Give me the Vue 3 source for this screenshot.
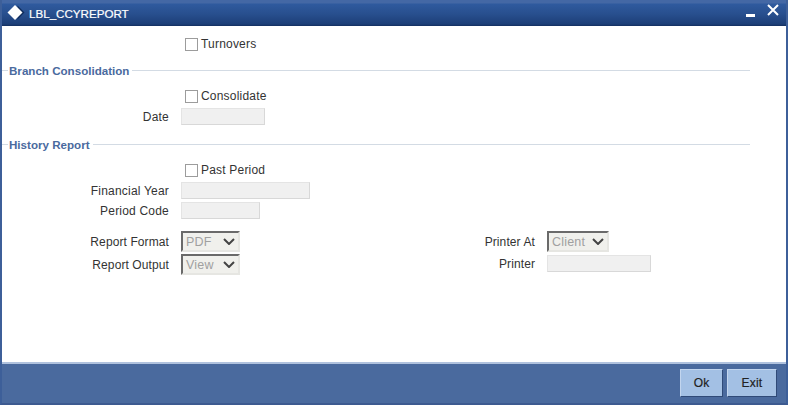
<script setup>
const hist = [
  { label: 'Financial Year', cls: 'w129' },
  { label: 'Period Code', cls: 'w79' }
]
</script>

<template>
  <div class="win">
    <header class="title">
      <svg class="logo" width="18" height="16" viewBox="0 0 18 16"><path d="M10.5 0.5 L17.5 7.5 L10.5 14.5 Z" fill="#0f2c5c"/><path d="M8 0 L15.5 7.5 L8 15 L0.5 7.5 Z" fill="#fff"/></svg>
      <span class="title-text">LBL_CCYREPORT</span>
      <svg class="min" width="9" height="3" viewBox="0 0 9 3"><rect width="9" height="3" fill="#fff"/></svg>
      <svg class="close" width="12" height="12" viewBox="0 0 12 12"><path d="M1 1 L11 11 M11 1 L1 11" stroke="#fff" stroke-width="2" fill="none"/></svg>
    </header>

    <main class="body">
      <div class="row check r1"><span class="label"></span><span class="box"></span><span class="txt">Turnovers</span></div>

      <div class="legend l1"><span>Branch Consolidation</span></div>
      <div class="row check r2"><span class="label"></span><span class="box"></span><span class="txt">Consolidate</span></div>
      <div class="row r3"><span class="label">Date</span><span class="input w84"></span></div>

      <div class="legend l2"><span>History Report</span></div>
      <div class="row check r4"><span class="label"></span><span class="box"></span><span class="txt">Past Period</span></div>
      <div v-for="h in hist" :key="h.label" class="row r5"><span class="label">{{ h.label }}</span><span class="input" :class="h.cls"></span></div>

      <div class="cols">
        <div class="col">
          <div class="row"><span class="label">Report Format</span>
            <span class="select w59"><span>PDF</span><svg width="12" height="7" viewBox="0 0 12 7"><path d="M1 1 L6 6 L11 1" stroke="#444" stroke-width="2" fill="none"/></svg></span>
          </div>
          <div class="row gap"><span class="label">Report Output</span>
            <span class="select w59"><span>View</span><svg width="12" height="7" viewBox="0 0 12 7"><path d="M1 1 L6 6 L11 1" stroke="#444" stroke-width="2" fill="none"/></svg></span>
          </div>
        </div>
        <div class="col right">
          <div class="row"><span class="label">Printer At</span>
            <span class="select w62"><span>Client</span><svg width="12" height="7" viewBox="0 0 12 7"><path d="M1 1 L6 6 L11 1" stroke="#444" stroke-width="2" fill="none"/></svg></span>
          </div>
          <div class="row gap2"><span class="label">Printer</span><span class="input w104"></span></div>
        </div>
      </div>
    </main>

    <footer class="foot">
      <button class="btn ok">Ok</button>
      <button class="btn exit">Exit</button>
    </footer>
  </div>
</template>

<style>
html, body { margin: 0; padding: 0; background: #fff; }
</style>

<style scoped>
.win {
  width: 788px; height: 405px; box-sizing: border-box;
  display: flex; flex-direction: column;
  background: #fff;
  border-left: 2px solid #3d5f99; border-right: 2px solid #3d5f99; border-bottom: 2px solid #3d5a90;
  font: 12px "Liberation Sans", Arial, sans-serif; color: #333; letter-spacing: .2px;
  overflow: hidden;
}
.title {
  height: 26px; box-sizing: border-box; flex: none;
  margin: 0 -2px; padding: 0 9px 0 7px;
  display: flex; align-items: center;
  background: linear-gradient(#4468a5 0, #4468a5 3px, #2f5a9e 4px, #284f8e 14px, #1d3f78 24px, #142f60 26px);
  color: #fff;
}
.logo { flex: none; }
.title-text { margin-left: 4px; font-size: 11.6px; letter-spacing: 0; -webkit-text-stroke: .2px #fff; }
.min { margin-left: auto; margin-top: 5px; }
.close { margin-left: 12px; margin-top: -6px; }

.body { flex: 1; min-height: 0; }
.row { display: flex; align-items: center; height: 17px; }
.label { width: 167px; text-align: right; margin-right: 12px; flex: none; white-space: nowrap; }
.check .label { margin-right: 16px; }
.box { width: 11px; height: 11px; border: 1px solid #9c9c9c; background: #fff; margin-right: 3px; flex: none; }
.txt { margin-bottom: 2px; }
.input {
  display: block; height: 17px; box-sizing: border-box; flex: none;
  background: #f0f0f0; border: 1px solid #e4e4e4; border-bottom-color: #d8d8d8; border-right-color: #d8d8d8;
}
.w84 { width: 84px; } .w129 { width: 129px; } .w79 { width: 79px; } .w104 { width: 104px; }
.w59 { width: 59px; } .w62 { width: 62px; }
.r1 { margin-top: 10px; }
.l1 { margin-top: 11px; }
.r2 { margin-top: 11px; }
.r3 { margin-top: 3px; }
.l2 { margin-top: 13px; }
.r4 { margin-top: 11px; }
.r5 { margin-top: 3px; }
.legend {
  height: 13px; margin-right: 36px; display: flex; align-items: center;
  font-weight: 700; font-size: 11.6px; letter-spacing: 0; color: #4a6a9e; padding-left: 7px;
}
.legend::before {
  content: ""; position: absolute; width: 6px; height: 1px; margin-left: -7px; background: #d3dbe4;
}
.legend::after { content: ""; flex: 1; height: 1px; background: #d3dbe4; margin-left: 3px; }
.cols { display: flex; margin-top: 12px; }
.col { width: 366px; flex: none; }
.col .row { height: 21px; }
.col .label { letter-spacing: .1px; }
.gap { margin-top: 2px; }
.col .gap2 { margin-top: 3px; height: 17px; }
.select {
  height: 21px; box-sizing: border-box; flex: none;
  display: flex; align-items: center; justify-content: space-between;
  background: #f0f0ec; color: #a0a0a0;
  border: 2px solid #e6e6e2; border-left-color: #6a6a6a; border-top-color: #6a6a6a;
  padding: 0 3px 0 3px; font-size: 12.5px;
}
.foot {
  height: 41px; box-sizing: border-box; flex: none;
  background: #4a6a9e; border-top: 2px solid #b0c2de;
  display: flex; justify-content: flex-end; align-items: flex-start;
  padding: 5px 9px 0 0; gap: 4px;
}
.btn {
  height: 28px; padding: 0; margin: 0;
  background: #a3c0e4; color: #222;
  border: 1px solid; border-color: #c2d5ee #2f4a78 #2f4a78 #c2d5ee;
  font: 12px "Liberation Sans", Arial, sans-serif; letter-spacing: .2px; -webkit-text-stroke: .2px #222;
}
.ok { width: 43px; } .exit { width: 50px; }
</style>
